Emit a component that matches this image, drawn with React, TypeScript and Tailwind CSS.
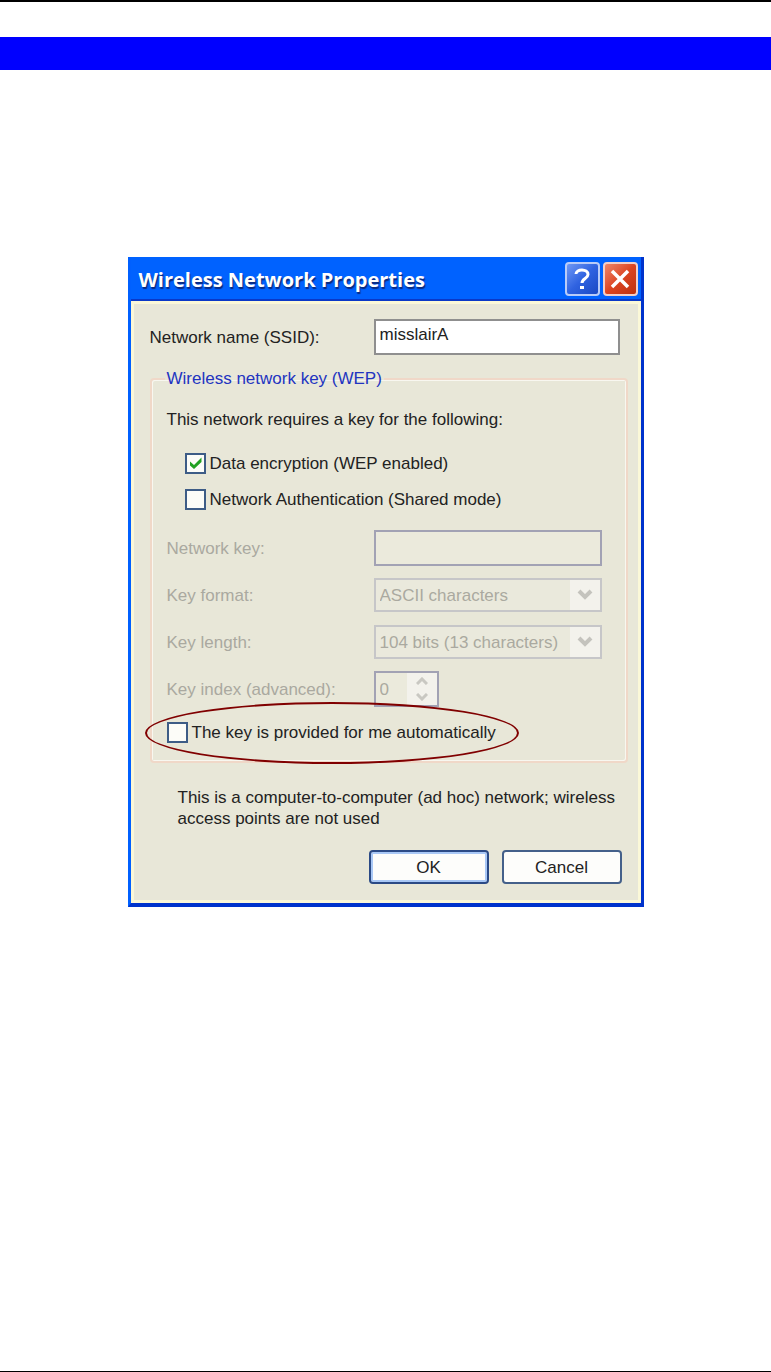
import { useState } from 'react';
import type { ReactNode } from 'react';

type CheckProps = {
  label: string;
  checked: boolean;
  onChange: (value: boolean) => void;
};

function Check({ label, checked, onChange }: CheckProps) {
  return (
    <label className="flex w-fit items-center gap-1 whitespace-nowrap">
      <span className="relative flex h-[21px] w-[21px] shrink-0">
        <input
          type="checkbox"
          checked={checked}
          onChange={(e) => onChange(e.target.checked)}
          className="h-[21px] w-[21px] appearance-none border-2 border-[#3d5c86] bg-[#fcfcf8]"
        />
        {checked && (
          <svg viewBox="0 0 21 21" className="pointer-events-none absolute inset-0" aria-hidden="true">
            <path d="M5 8.5 L9 12 L16.5 4.5 V9 L9 16 L5 12.5 Z" fill="#21a121" />
          </svg>
        )}
      </span>
      {label}
    </label>
  );
}

function Row({ id, label, children }: { id: string; label: string; children: ReactNode }) {
  return (
    <div className="flex h-9 items-center text-[#aaa9a0]">
      <label htmlFor={id} className="w-[207px] shrink-0 whitespace-nowrap">
        {label}
      </label>
      {children}
    </div>
  );
}

function DisabledSelect({ id, value }: { id: string; value: string }) {
  return (
    <div className="relative h-[34px] w-[228px]">
      <select
        id={id}
        disabled
        className="h-full w-full appearance-none border-2 border-[#c6c6c8] bg-[#eae9dc] pl-1 text-[#aaa9a0] opacity-100"
      >
        <option>{value}</option>
      </select>
      <span className="pointer-events-none absolute inset-y-[2px] right-[2px] flex w-[30px] items-center justify-center bg-[#f3f2ec]">
        <svg width="16" height="12" viewBox="0 0 16 12" aria-hidden="true">
          <path d="M2 2 L8 8 L14 2" fill="none" stroke="#c4c3bd" strokeWidth="4" />
        </svg>
      </span>
    </div>
  );
}

export default function App() {
  const [ssid, setSsid] = useState('misslairA');
  const [encryption, setEncryption] = useState(true);
  const [sharedAuth, setSharedAuth] = useState(false);
  const [autoKey, setAutoKey] = useState(false);

  return (
    <div className="flex min-h-screen flex-col border-t-2 border-b border-black bg-white font-['Liberation_Sans',Arial,sans-serif] text-[17px] leading-[21px] text-[#222]">
      <div className="mt-[35px] h-[33px] bg-[#0000ff]" />

      <main className="mt-[187px]">
        <section
          aria-labelledby="dialog-title"
          className="mx-auto w-full max-w-[516px] border-r-[3px] border-b-[4px] border-l-[3px] border-r-[#0033cc] border-b-[#0033cc] border-l-[#0060ff] bg-[#e8e7d8]"
        >
          {/* Title bar */}
          <header className="flex h-11 items-center justify-between border-b-2 border-[#0a38c8] bg-[#0062ff] pt-0.5 pr-[3px] pl-2">
            <h1
              id="dialog-title"
              className="font-['Open_Sans','Liberation_Sans',sans-serif] text-[20px] font-bold whitespace-nowrap text-white [text-shadow:1px_2px_1px_#0a2a80]"
            >
              Wireless Network Properties
            </h1>
            <div className="flex gap-[3px]">
              <button
                type="button"
                aria-label="Help"
                className="flex h-[34px] w-[35px] items-center justify-center rounded-[4px] border-2 border-[#b9ccf8] bg-[#2f62e0] bg-linear-to-br from-[#6f97f4] via-[#2f62e0] to-[#1b49c4]"
              >
                <svg width="20" height="24" viewBox="0 0 20 24" fill="none" aria-hidden="true">
                  <path d="M4 7 C4 1.5 16 1.5 16 7.5 C16 11.5 10 11.5 10 16" stroke="#fff" strokeWidth="3" />
                  <rect x="8" y="19" width="4" height="3" fill="#fff" />
                </svg>
              </button>
              <button
                type="button"
                aria-label="Close"
                className="flex h-[34px] w-[35px] items-center justify-center rounded-[4px] border-2 border-[#f3cfc8] bg-[#dc4420] bg-linear-to-br from-[#ee8468] via-[#dc4420] to-[#bd3010]"
              >
                <svg width="20" height="20" viewBox="0 0 20 20" aria-hidden="true">
                  <path d="M2 2 L18 18 M18 2 L2 18" stroke="#fff" strokeWidth="3.5" />
                </svg>
              </button>
            </div>
          </header>

          <div className="border-3 border-[#fbf8d8] px-4 pt-[15px] pb-4">
            <div className="flex items-center">
              <label htmlFor="ssid" className="w-[224px] shrink-0 whitespace-nowrap">
                Network name (SSID):
              </label>
              <input
                id="ssid"
                type="text"
                value={ssid}
                onChange={(e) => setSsid(e.target.value)}
                className="h-9 w-[246px] border-2 border-[#8f8f8f] bg-white px-1 pb-1"
              />
            </div>

            <fieldset className="mt-[13px] w-[478px] rounded-[4px] border-2 border-[#f0d8c8] px-[13px] pb-[18px] shadow-[inset_-1px_-1px_0_#f8f7f0,inset_1px_1px_0_#f8f7f0]">
              <legend className="px-0.5 text-[#2234c0]">Wireless network key (WEP)</legend>

              <p className="mt-5 px-0.5">This network requires a key for the following:</p>

              <div className="mt-[23px] flex flex-col gap-[15px] pl-5">
                <Check label="Data encryption (WEP enabled)" checked={encryption} onChange={setEncryption} />
                <Check label="Network Authentication (Shared mode)" checked={sharedAuth} onChange={setSharedAuth} />
              </div>

              <div className="mt-5 flex flex-col gap-[11px] px-0.5">
                <Row id="key" label="Network key:">
                  <input
                    id="key"
                    type="text"
                    disabled
                    className="h-9 w-[228px] border-2 border-[#a2a2b4] bg-[#ebeadc] px-1"
                  />
                </Row>
                <Row id="format" label="Key format:">
                  <DisabledSelect id="format" value="ASCII characters" />
                </Row>
                <Row id="length" label="Key length:">
                  <DisabledSelect id="length" value="104 bits (13 characters)" />
                </Row>
                <Row id="index" label="Key index (advanced):">
                  <div className="flex h-9 w-[65px] border-2 border-[#a2a2b4] bg-[#ebeadc]">
                    <input
                      id="index"
                      type="text"
                      inputMode="numeric"
                      value="0"
                      readOnly
                      disabled
                      className="w-[31px] px-1"
                    />
                    <div className="flex flex-1 flex-col bg-[#f3f2ec]">
                      <button type="button" disabled aria-label="Increase" className="flex flex-1 items-center justify-center">
                        <svg width="12" height="8" viewBox="0 0 12 8" aria-hidden="true">
                          <path d="M1 7 L6 2 L11 7" fill="none" stroke="#c9c8c2" strokeWidth="3" />
                        </svg>
                      </button>
                      <button type="button" disabled aria-label="Decrease" className="flex flex-1 items-center justify-center">
                        <svg width="12" height="8" viewBox="0 0 12 8" aria-hidden="true">
                          <path d="M1 1 L6 6 L11 1" fill="none" stroke="#c9c8c2" strokeWidth="3" />
                        </svg>
                      </button>
                    </div>
                  </div>
                </Row>
              </div>

              {/* Circled option */}
              <div className="relative mt-[15px] px-0.5">
                <Check label="The key is provided for me automatically" checked={autoKey} onChange={setAutoKey} />
                <div className="pointer-events-none absolute -top-5 -left-5 h-[62px] w-[374px] rounded-[50%] border-2 border-[#800000]" />
              </div>
            </fieldset>

            <p className="mt-6 pl-7">
              This is a computer-to-computer (ad hoc) network; wireless
              <br />
              access points are not used
            </p>

            <div className="mt-[21px] flex justify-end gap-[13px]">
              <button
                type="button"
                className="h-[34px] w-[120px] rounded-[4px] border-2 border-[#2b4a86] bg-[#fdfdfb] shadow-[inset_0_0_0_2px_#a9c8f6]"
              >
                OK
              </button>
              <button
                type="button"
                className="h-[34px] w-[120px] rounded-[4px] border-2 border-[#44608a] bg-[#fdfdfb]"
              >
                Cancel
              </button>
            </div>
          </div>
        </section>
      </main>
    </div>
  );
}
